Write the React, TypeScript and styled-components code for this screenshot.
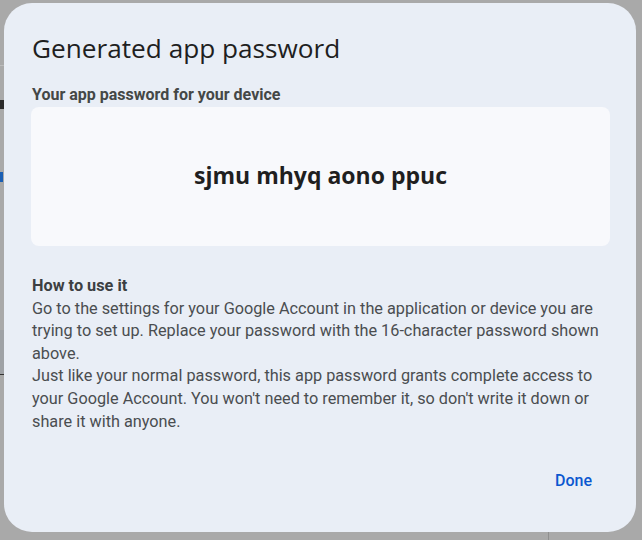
import React from "react";
import styled, { createGlobalStyle } from "styled-components";

const Global = createGlobalStyle`
  html, body { margin: 0; padding: 0; }
  body { background: #a9a9a9; font-family: Roboto, "Liberation Sans", sans-serif; }
`;

const Page = styled.div`
  position: relative;
  width: 642px;
  height: 540px;
  overflow: hidden;
  background: #a9a9a9;
`;

/* faint remains of the page beneath the scrim, visible at the left edge */
const BackdropColumn = styled.div`
  width: 8px;
  height: 100%;
  display: flex;
  flex-direction: column;
`;

const Strip = styled.div<{ $h: number; $color?: string; $w?: number }>`
  flex: none;
  height: ${(p) => p.$h}px;
  width: ${(p) => p.$w ?? 8}px;
  background: ${(p) => p.$color ?? "transparent"};
`;

const BackdropFoot = styled.div`
  position: absolute;
  left: 548px;
  bottom: 0;
  width: 1px;
  height: 14px;
  background: #8f8f8f;
`;

const Dialog = styled.div`
  position: absolute;
  left: 4px;
  top: 3px;
  width: 632px;
  height: 529px;
  box-sizing: border-box;
  border-radius: 28px;
  background: #e9eef6;
  padding: 28px 26px 0 27px;
  display: flex;
  flex-direction: column;
`;

const Title = styled.h1`
  margin: 0 0 0 1px;
  font-family: "Open Sans", sans-serif;
  font-weight: 400;
  font-size: 26.2px;
  line-height: 34px;
  color: #1f1f1f;
`;

const Label = styled.div`
  margin: 20px 0 0 1px;
  font-family: Roboto, sans-serif;
  font-weight: 700;
  font-size: 16px;
  line-height: 20px;
  color: #444746;
`;

const PasswordBox = styled.div`
  margin-top: 2px;
  height: 139px;
  border-radius: 8px;
  background: #f8f9fc;
  display: flex;
  align-items: center;
  justify-content: center;
`;

const Password = styled.div`
  font-family: "Open Sans", sans-serif;
  font-weight: 700;
  font-size: 23px;
  line-height: 28px;
  color: #1f1f1f;
  margin-top: -4px;
`;

const Section = styled.div`
  margin: 29px 0 0 1px;
  color: #4a4d50;
  font-family: Roboto, sans-serif;
  font-size: 16.25px;
  line-height: 22.6px;
`;

const SectionTitle = styled.div`
  font-weight: 700;
  color: #3c3f42;
`;

const Para = styled.p`
  margin: 0;
`;

const Footer = styled.div`
  margin-top: auto;
  margin-bottom: 33px;
  display: flex;
  justify-content: flex-end;
`;

const DoneButton = styled.button`
  border: none;
  background: transparent;
  font-family: Roboto, sans-serif;
  font-weight: 500;
  font-size: 16px;
  line-height: 20px;
  color: #0b57d0;
  padding: 8px 18px 8px 12px;
  cursor: pointer;
`;

export default function App() {
  return (
    <>
      <Global />
      <Page>
        <BackdropColumn>
          <Strip $h={65} />
          <Strip $h={1} $color="#bcbcbc" />
          <Strip $h={34} />
          <Strip $h={9} $w={4} $color="#2b2b2b" />
          <Strip $h={63} />
          <Strip $h={10} $w={3} $color="#1a5fb4" />
          <Strip $h={148} />
          <Strip $h={44} $color="#9fa2a6" />
          <Strip $h={1} $color="#333333" />
        </BackdropColumn>
        <BackdropFoot />
        <Dialog role="dialog">
          <Title>Generated app password</Title>
          <Label>Your app password for your device</Label>
          <PasswordBox>
            <Password>sjmu mhyq aono ppuc</Password>
          </PasswordBox>
          <Section>
            <SectionTitle>How to use it</SectionTitle>
            <Para>
              Go to the settings for your Google Account in the application or device you are
              trying to set up. Replace your password with the 16-character password shown
              above.
            </Para>
            <Para>
              Just like your normal password, this app password grants complete access to
              your Google Account. You won't need to remember it, so don't write it down or
              share it with anyone.
            </Para>
          </Section>
          <Footer>
            <DoneButton>Done</DoneButton>
          </Footer>
        </Dialog>
      </Page>
    </>
  );
}
